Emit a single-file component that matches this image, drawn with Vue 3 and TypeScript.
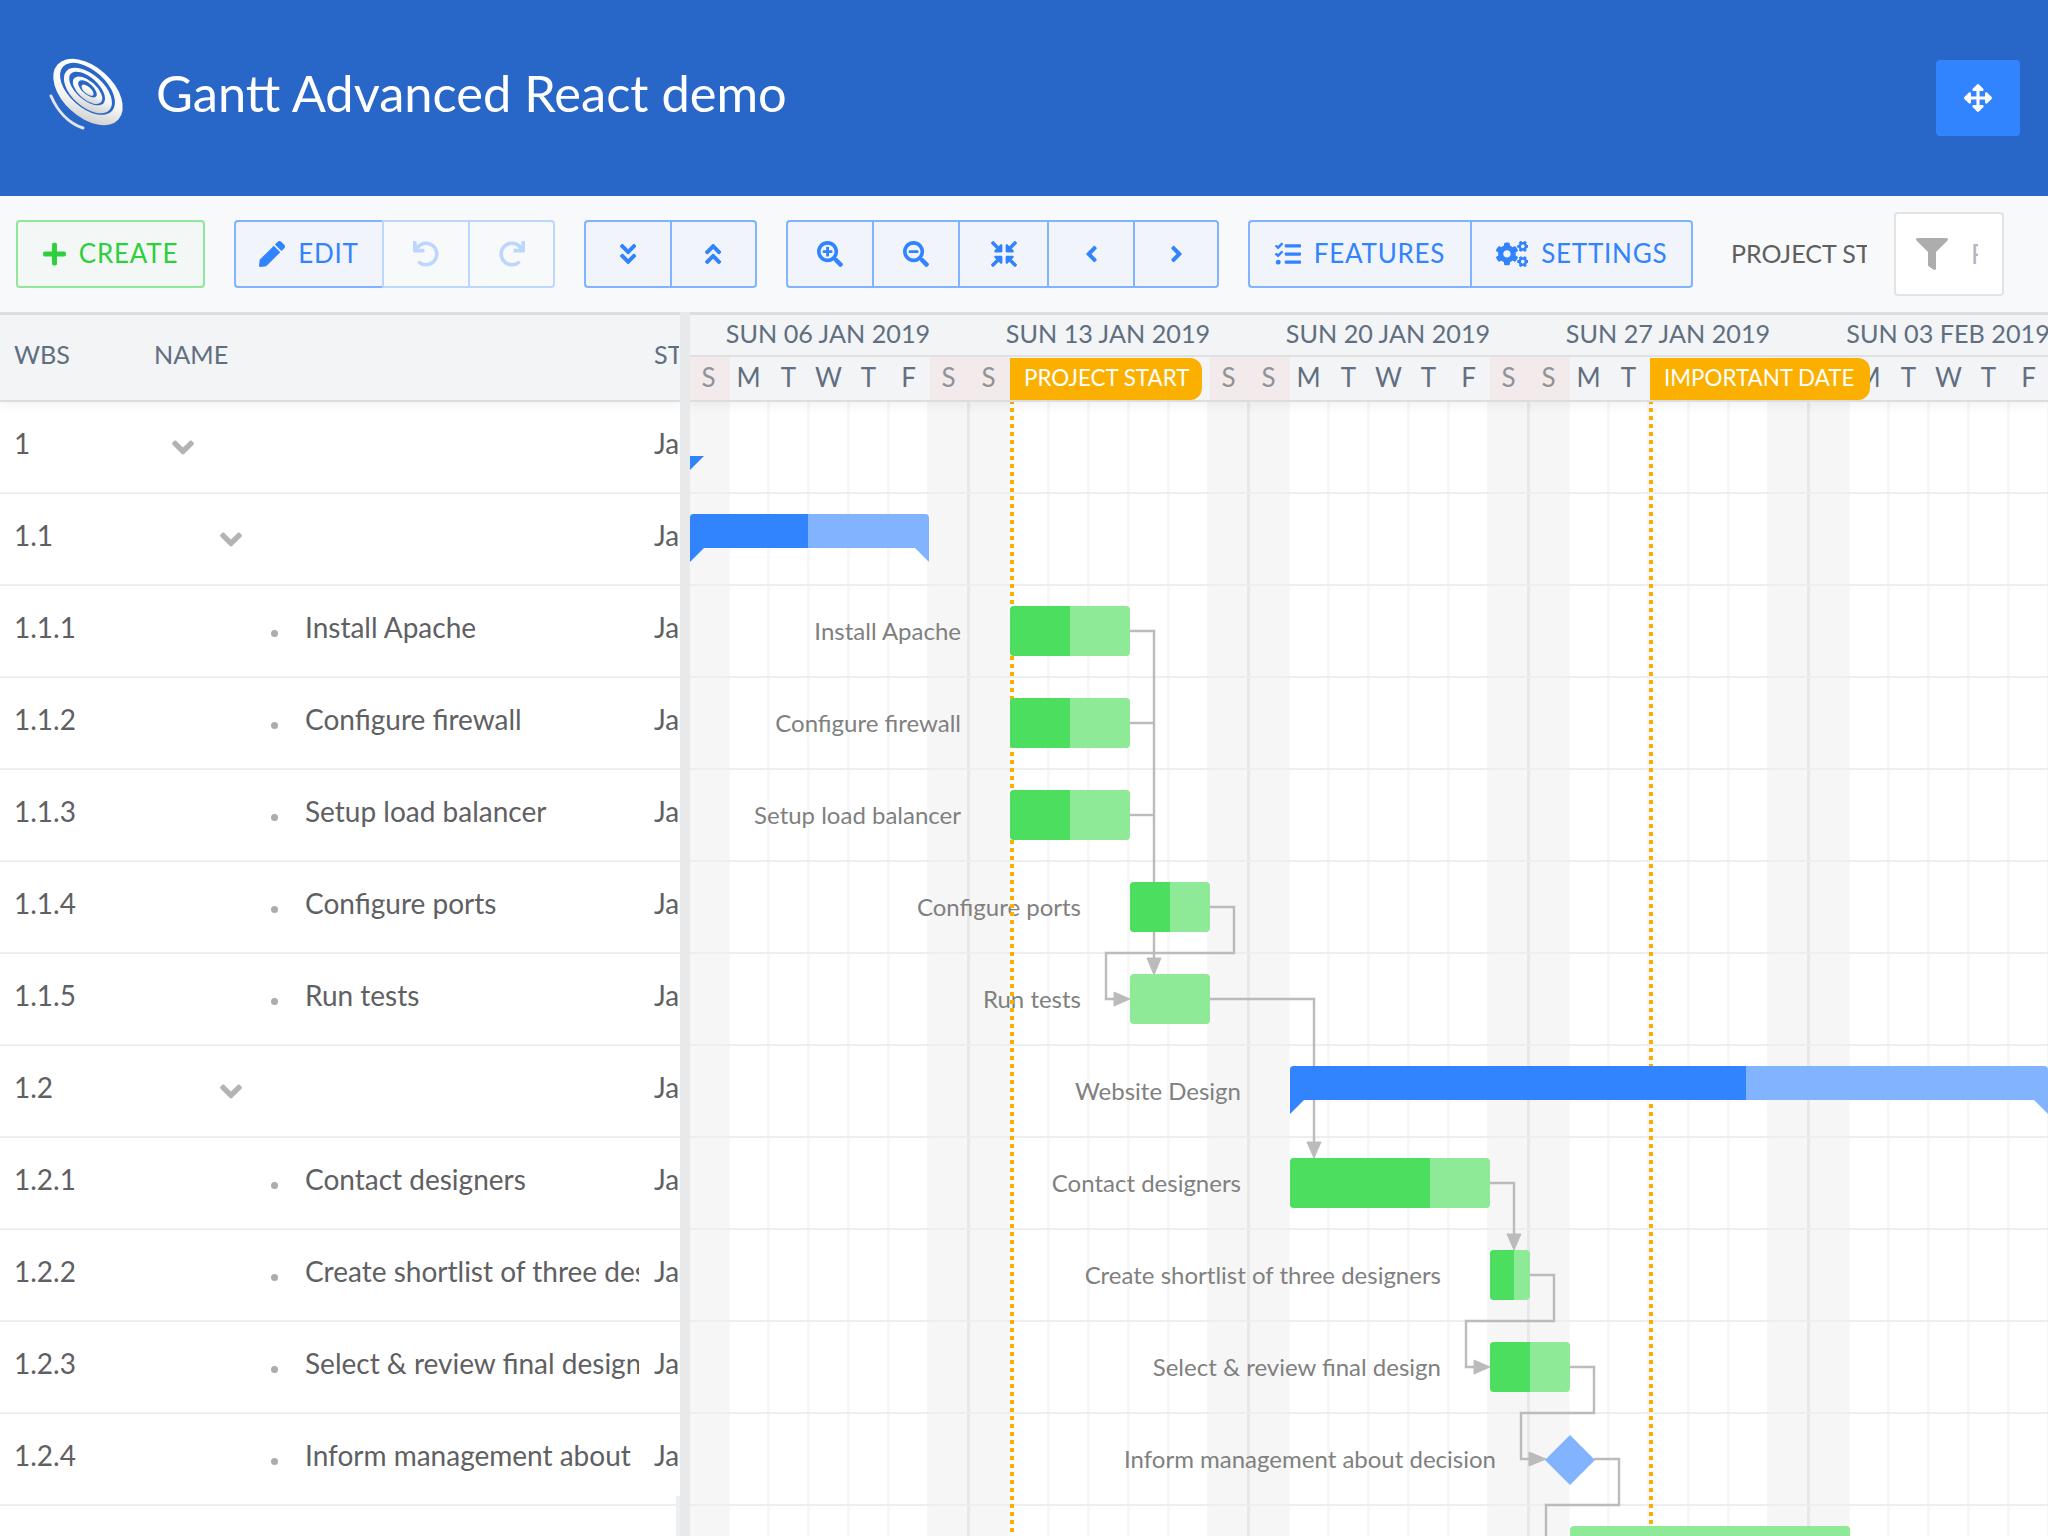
<script setup lang="ts">
interface Icon {
  vb: string
  d: string
  flip?: boolean
}

const angleDouble =
  'M143 256.3L7 120.3c-9.4-9.4-9.4-24.6 0-33.9l22.6-22.6c9.4-9.4 24.6-9.4 33.9 0l96.4 96.4 96.4-96.4c9.4-9.4 24.6-9.4 33.9 0L313 86.3c9.4 9.4 9.4 24.6 0 33.9l-136 136c-9.4 9.5-24.6 9.5-34 .1zm34 192l136-136c9.4-9.4 9.4-24.6 0-33.9l-22.6-22.6c-9.4-9.4-24.6-9.4-33.9 0L160 352.1l-96.4-96.4c-9.4-9.4-24.6-9.4-33.9 0L7 278.3c-9.4 9.4-9.4 24.6 0 33.9l136 136c9.4 9.5 24.6 9.5 34 .1z'
const lensTail =
  'zm201 284.7L476.7 505c-9.4 9.4-24.6 9.4-33.9 0L343 405.3c-4.5-4.5-7-10.6-7-17V372c-35.3 27.6-79.7 44-128 44C93.1 416 0 322.9 0 208S93.1 0 208 0s208 93.1 208 208c0 48.3-16.4 92.7-44 128h16.3c6.4 0 12.5 2.5 17 7l99.7 99.7c9.3 9.4 9.3 24.6 0 34zM344 208c0-75.2-60.8-136-136-136S72 132.8 72 208s60.8 136 136 136 136-60.8 136-136z'
const undo =
  'M212.333 224.333H12c-6.627 0-12-5.373-12-12V12C0 5.373 5.373 0 12 0h48c6.627 0 12 5.373 12 12v78.112C117.773 39.279 184.26 7.47 258.175 8.007c136.906.994 246.448 111.623 246.157 248.532C504.041 393.258 393.12 504 256.333 504c-64.089 0-122.496-24.313-166.51-64.215-5.099-4.622-5.334-12.554-.467-17.42l33.967-33.967c4.474-4.474 11.662-4.717 16.401-.525C170.76 415.336 211.58 432 256.333 432c97.268 0 176-78.716 176-176 0-97.267-78.716-176-176-176-58.496 0-110.28 28.476-142.274 72.333h98.274c6.627 0 12 5.373 12 12v48c0 6.627-5.373 12-12 12z'
const angleLeft =
  'M31.7 239l136-136c9.4-9.4 24.6-9.4 33.9 0l22.6 22.6c9.4 9.4 9.4 24.6 0 33.9L127.9 256l96.4 96.4c9.4 9.4 9.4 24.6 0 33.9L201.7 409c-9.4 9.4-24.6 9.4-33.9 0l-136-136c-9.5-9.4-9.5-24.6-.1-34z'

const icons: Record<string, Icon> = {
  plus: { vb: '0 0 448 512', d: 'M416 208H272V64c0-17.67-14.33-32-32-32h-32c-17.67 0-32 14.33-32 32v144H32c-17.67 0-32 14.33-32 32v32c0 17.67 14.33 32 32 32h144v144c0 17.67 14.33 32 32 32h32c17.67 0 32-14.33 32-32V304h144c17.67 0 32-14.33 32-32v-32c0-17.67-14.33-32-32-32z' },
  pen: { vb: '0 0 512 512', d: 'M290.74 93.24l128.02 128.02-277.99 277.99-114.14 12.6C11.35 513.54-1.56 500.62.14 485.34l12.7-114.22 277.9-277.88zm207.2-19.06l-60.11-60.11c-18.75-18.75-49.16-18.75-67.91 0l-56.55 56.55 128.02 128.02 56.55-56.55c18.75-18.76 18.75-49.16 0-67.91z' },
  undo: { vb: '0 0 512 512', d: undo },
  redo: { vb: '0 0 512 512', d: undo, flip: true },
  down: { vb: '0 0 320 512', d: angleDouble },
  up: { vb: '0 0 320 512', d: 'M177 255.7l136 136c9.4 9.4 9.4 24.6 0 33.9l-22.6 22.6c-9.4 9.4-24.6 9.4-33.9 0L160 351.9l-96.4 96.4c-9.4 9.4-24.6 9.4-33.9 0L7 425.7c-9.4-9.4-9.4-24.6 0-33.9l136-136c9.4-9.5 24.6-9.5 34-.1zm-34-192L7 199.7c-9.4 9.4-9.4 24.6 0 33.9l22.6 22.6c9.4 9.4 24.6 9.4 33.9 0l96.4-96.4 96.4 96.4c9.4 9.4 24.6 9.4 33.9 0l22.6-22.6c9.4-9.4 9.4-24.6 0-33.9l-136-136c-9.2-9.4-24.4-9.4-33.8 0z' },
  zoomIn: { vb: '0 0 512 512', d: 'M304 192v32c0 6.6-5.4 12-12 12h-56v56c0 6.6-5.4 12-12 12h-32c-6.6 0-12-5.4-12-12v-56h-56c-6.6 0-12-5.4-12-12v-32c0-6.6 5.4-12 12-12h56v-56c0-6.6 5.4-12 12-12h32c6.6 0 12 5.4 12 12v56h56c6.6 0 12 5.4 12 12' + lensTail },
  zoomOut: { vb: '0 0 512 512', d: 'M304 192v32c0 6.6-5.4 12-12 12H124c-6.6 0-12-5.4-12-12v-32c0-6.6 5.4-12 12-12h168c6.6 0 12 5.4 12 12' + lensTail },
  fit: { vb: '0 0 512 512', d: 'M200 288H88c-21.4 0-32.1 25.8-17 41l32.9 31-99.2 99.3c-6.2 6.2-6.2 16.4 0 22.6l25.4 25.4c6.2 6.2 16.4 6.2 22.6 0L152 408l31.1 33c15.1 15.1 40.9 4.4 40.9-17V312c0-13.3-10.7-24-24-24zm112-64h112c21.4 0 32.1-25.9 17-41l-33-31 99.3-99.3c6.2-6.2 6.2-16.4 0-22.6L481.9 4.7c-6.2-6.2-16.4-6.2-22.6 0L360 104l-31.1-33C313.8 55.9 288 66.6 288 88v112c0 13.3 10.7 24 24 24zm96 136l33-31.1c15.1-15.1 4.4-40.9-17-40.9H312c-13.3 0-24 10.7-24 24v112c0 21.4 25.9 32.1 41 17l31-32.9 99.3 99.3c6.2 6.2 16.4 6.2 22.6 0l25.4-25.4c6.2-6.2 6.2-16.4 0-22.6L408 360zM183 71.1L152 104 52.7 4.7c-6.2-6.2-16.4-6.2-22.6 0L4.7 30.1c-6.2 6.2-6.2 16.4 0 22.6L104 152l-33 31.1C55.9 198.2 66.6 224 88 224h112c13.3 0 24-10.7 24-24V88c0-21.3-25.9-32-41-16.9z' },
  left: { vb: '0 0 256 512', d: angleLeft },
  right: { vb: '0 0 256 512', d: angleLeft, flip: true },
  tasks: { vb: '0 0 512 512', d: 'M139.61 35.5a12 12 0 0 0-17 0L58.93 98.81l-22.7-22.12a12 12 0 0 0-17 0L3.53 92.41a12 12 0 0 0 0 17l47.59 47.4a12.78 12.78 0 0 0 17.61 0l15.59-15.62L156.52 69a12.09 12.09 0 0 0 .09-17zm0 159.19a12 12 0 0 0-17 0l-63.68 63.72-22.7-22.1a12 12 0 0 0-17 0L3.53 252a12 12 0 0 0 0 17L51 316.5a12.77 12.77 0 0 0 17.6 0l15.7-15.69 72.2-72.22a12 12 0 0 0 .09-16.9zM64 368c-26.49 0-48.59 21.5-48.59 48S37.53 464 64 464a48 48 0 0 0 0-96zm432 16H208a16 16 0 0 0-16 16v32a16 16 0 0 0 16 16h288a16 16 0 0 0 16-16v-32a16 16 0 0 0-16-16zm0-320H208a16 16 0 0 0-16 16v32a16 16 0 0 0 16 16h288a16 16 0 0 0 16-16V80a16 16 0 0 0-16-16zm0 160H208a16 16 0 0 0-16 16v32a16 16 0 0 0 16 16h288a16 16 0 0 0 16-16v-32a16 16 0 0 0-16-16z' },
  cogs: { vb: '0 0 640 512', d: 'M512.1 191l-8.2 14.3c-3 5.3-9.4 7.5-15.1 5.4-11.8-4.4-22.6-10.7-32.1-18.6-4.6-3.8-5.8-10.5-2.8-15.7l8.2-14.3c-6.9-8-12.3-17.3-15.9-27.4h-16.5c-6 0-11.2-4.3-12.2-10.3-2-12-2.1-24.6 0-37.1 1-6 6.2-10.4 12.2-10.4h16.5c3.6-10.1 9-19.4 15.9-27.4l-8.2-14.3c-3-5.2-1.9-11.9 2.8-15.7 9.5-7.9 20.4-14.2 32.1-18.6 5.7-2.1 12.1.1 15.1 5.4l8.2 14.3c10.5-1.9 21.2-1.9 31.7 0L552 6.3c3-5.3 9.4-7.5 15.1-5.4 11.8 4.4 22.6 10.7 32.1 18.6 4.6 3.8 5.8 10.5 2.8 15.7l-8.2 14.3c6.9 8 12.3 17.3 15.9 27.4h16.5c6 0 11.2 4.3 12.2 10.3 2 12 2.1 24.6 0 37.1-1 6-6.2 10.4-12.2 10.4h-16.5c-3.6 10.1-9 19.4-15.9 27.4l8.2 14.3c3 5.2 1.9 11.9-2.8 15.7-9.5 7.9-20.4 14.2-32.1 18.6-5.7 2.1-12.1-.1-15.1-5.4l-8.2-14.3c-10.4 1.9-21.2 1.9-31.7 0zm-10.5-58.8c38.5 29.6 82.4-14.3 52.8-52.8-38.5-29.7-82.4 14.3-52.8 52.8zM386.3 286.1l33.7 16.8c10.1 5.8 14.5 18.1 10.5 29.1-8.9 24.2-26.4 46.4-42.6 65.8-7.4 8.9-20.2 11.1-30.3 5.3l-29.1-16.8c-16 13.7-34.6 24.6-54.9 31.7v33.6c0 11.6-8.3 21.6-19.7 23.6-24.6 4.2-50.4 4.4-75.9 0-11.5-2-20-11.9-20-23.6V418c-20.3-7.2-38.9-18-54.9-31.7L74 403c-10 5.8-22.9 3.6-30.3-5.3-16.2-19.4-33.3-41.6-42.2-65.7-4-10.9.4-23.2 10.5-29.1l33.3-16.8c-3.9-20.9-3.9-42.4 0-63.4L12 205.8c-10.1-5.8-14.6-18.1-10.5-29 8.9-24.2 26-46.4 42.2-65.8 7.4-8.9 20.2-11.1 30.3-5.3l29.1 16.8c16-13.7 34.6-24.6 54.9-31.7V57.1c0-11.5 8.2-21.5 19.6-23.5 24.6-4.2 50.5-4.4 76-.1 11.5 2 20 11.9 20 23.6v33.6c20.3 7.2 38.9 18 54.9 31.7l29.1-16.8c10-5.8 22.9-3.6 30.3 5.3 16.2 19.4 33.2 41.6 42.1 65.8 4 10.9.1 23.2-10 29.1l-33.7 16.8c3.9 21 3.9 42.5 0 63.5zm-117.6 21.1c59.2-77-28.7-164.9-105.7-105.7-59.2 77 28.7 164.9 105.7 105.7zm243.4 182.7l-8.2 14.3c-3 5.3-9.4 7.5-15.1 5.4-11.8-4.4-22.6-10.7-32.1-18.6-4.6-3.8-5.8-10.5-2.8-15.7l8.2-14.3c-6.9-8-12.3-17.3-15.9-27.4h-16.5c-6 0-11.2-4.3-12.2-10.3-2-12-2.1-24.6 0-37.1 1-6 6.2-10.4 12.2-10.4h16.5c3.6-10.1 9-19.4 15.9-27.4l-8.2-14.3c-3-5.2-1.9-11.9 2.8-15.7 9.5-7.9 20.4-14.2 32.1-18.6 5.7-2.1 12.1.1 15.1 5.4l8.2 14.3c10.5-1.9 21.2-1.9 31.7 0l8.2-14.3c3-5.3 9.4-7.5 15.1-5.4 11.8 4.4 22.6 10.7 32.1 18.6 4.6 3.8 5.8 10.5 2.8 15.7l-8.2 14.3c6.9 8 12.3 17.3 15.9 27.4h16.5c6 0 11.2 4.3 12.2 10.3 2 12 2.1 24.6 0 37.1-1 6-6.2 10.4-12.2 10.4h-16.5c-3.6 10.1-9 19.4-15.9 27.4l8.2 14.3c3 5.2 1.9 11.9-2.8 15.7-9.5 7.9-20.4 14.2-32.1 18.6-5.7 2.1-12.1-.1-15.1-5.4l-8.2-14.3c-10.4 1.9-21.2 1.9-31.7 0zM501.6 431c38.5 29.6 82.4-14.3 52.8-52.8-38.5-29.6-82.4 14.3-52.8 52.8z' },
  filter: { vb: '0 0 512 512', d: 'M487.976 0H24.028C2.71 0-8.047 25.866 7.058 40.971L192 225.941V432c0 7.831 3.821 15.17 10.237 19.662l80 55.98C298.02 518.69 320 507.493 320 487.98V225.941l184.947-184.97C520.021 25.896 509.338 0 487.976 0z' },
  move: { vb: '0 0 512 512', d: 'M352.201 425.775l-79.196 79.196c-9.373 9.373-24.568 9.373-33.941 0l-79.196-79.196c-15.119-15.119-4.411-40.971 16.971-40.97h51.162L228 284H127.196v51.162c0 21.382-25.851 32.09-40.971 16.971L7.029 272.937c-9.373-9.373-9.373-24.569 0-33.941L86.225 159.8c15.119-15.119 40.971-4.411 40.971 16.971V228H228V127.196h-51.23c-21.382 0-32.09-25.851-16.971-40.971l79.196-79.196c9.373-9.373 24.568-9.373 33.941 0l79.196 79.196c15.119 15.119 4.411 40.971-16.971 40.971h-51.162V228h100.804v-51.162c0-21.382 25.851-32.09 40.97-16.971l79.196 79.196c9.373 9.373 9.373 24.569 0 33.941L425.773 352.2c-15.119 15.119-40.971 4.411-40.97-16.971V284H284v100.804h51.23c21.382 0 32.09 25.851 16.971 40.971z' },
  chevron: { vb: '0 0 320 512', d: 'M143 352.3L7 216.3c-9.4-9.4-9.4-24.6 0-33.9l22.6-22.6c9.4-9.4 24.6-9.4 33.9 0l96.4 96.4 96.4-96.4c9.4-9.4 24.6-9.4 33.9 0l22.6 22.6c9.4 9.4 9.4 24.6 0 33.9l-136 136c-9.2 9.4-24.4 9.4-33.8 0z' },
}

interface Btn {
  icon: string
  text?: string
  width: number
  disabled?: boolean
}

const toolbar: Btn[][] = [
  [
    { icon: 'pen', text: 'EDIT', width: 148 },
    { icon: 'undo', width: 86, disabled: true },
    { icon: 'redo', width: 87, disabled: true },
  ],
  [
    { icon: 'down', width: 86 },
    { icon: 'up', width: 87 },
  ],
  [
    { icon: 'zoomIn', width: 86 },
    { icon: 'zoomOut', width: 86 },
    { icon: 'fit', width: 89 },
    { icon: 'left', width: 86 },
    { icon: 'right', width: 86 },
  ],
  [
    { icon: 'tasks', text: 'FEATURES', width: 222 },
    { icon: 'cogs', text: 'SETTINGS', width: 223 },
  ],
]

interface Row {
  wbs: string
  name?: string
  level?: number
}

const rows: Row[] = [
  { wbs: '1', level: 0 },
  { wbs: '1.1', level: 1 },
  { wbs: '1.1.1', name: 'Install Apache' },
  { wbs: '1.1.2', name: 'Configure firewall' },
  { wbs: '1.1.3', name: 'Setup load balancer' },
  { wbs: '1.1.4', name: 'Configure ports' },
  { wbs: '1.1.5', name: 'Run tests' },
  { wbs: '1.2', level: 1 },
  { wbs: '1.2.1', name: 'Contact designers' },
  { wbs: '1.2.2', name: 'Create shortlist of three designers' },
  { wbs: '1.2.3', name: 'Select & review final design' },
  { wbs: '1.2.4', name: 'Inform management about decision' },
  { wbs: '' },
]

const weeks = ['SUN 06 JAN 2019', 'SUN 13 JAN 2019', 'SUN 20 JAN 2019', 'SUN 27 JAN 2019', 'SUN 03 FEB 2019']
const days = Array.from({ length: 35 }, (_, i) => ({
  letter: 'SMTWTFS'[i % 7],
  weekend: i % 7 === 0 || i % 7 === 6,
  saturday: i % 7 === 6,
}))

const DAY = 40
const ROW = 92

interface Task {
  row: number
  day: number
  len: number
  done: number
  label?: string
}

const tasks: Task[] = [
  { row: 2, day: 8, len: 3, done: 50, label: 'Install Apache' },
  { row: 3, day: 8, len: 3, done: 50, label: 'Configure firewall' },
  { row: 4, day: 8, len: 3, done: 50, label: 'Setup load balancer' },
  { row: 5, day: 11, len: 2, done: 50, label: 'Configure ports' },
  { row: 6, day: 11, len: 2, done: 0, label: 'Run tests' },
  { row: 8, day: 15, len: 5, done: 70, label: 'Contact designers' },
  { row: 9, day: 20, len: 1, done: 60, label: 'Create shortlist of three designers' },
  { row: 10, day: 20, len: 2, done: 50, label: 'Select & review final design' },
  { row: 12, day: 22, len: 7, done: 0 },
]

const parents = [
  { row: 1, left: 0, width: 239, done: 49.4 },
  { row: 7, left: 600, width: 758, done: 60.2 },
]

const labels = [
  ...tasks.filter((t) => t.label).map((t) => ({ text: t.label as string, x: t.day * DAY - 49, y: t.row * ROW + 44 })),
  { text: 'Website Design', x: 600 - 49, y: 7 * ROW + 44 },
  { text: 'Inform management about decision', x: 855 - 49, y: 11 * ROW + 44 },
]

// connector lines, in page coordinates (the svg viewBox starts at the canvas corner)
const links = [
  '1130,631 1154,631 1154,960',
  '1130,723 1154,723',
  '1130,815 1154,815',
  '1210,907 1234,907 1234,953 1106,953 1106,999 1116,999',
  '1210,999 1314,999 1314,1144',
  '1490,1183 1514,1183 1514,1236',
  '1530,1275 1554,1275 1554,1321 1466,1321 1466,1367 1476,1367',
  '1570,1367 1594,1367 1594,1413 1521,1413 1521,1459 1531,1459',
  '1594,1459 1619,1459 1619,1505 1546,1505 1546,1540',
]
const arrows = [
  '1147,958 1161,958 1154,975',
  '1114,992 1130,999 1114,1006',
  '1307,1142 1321,1142 1314,1158',
  '1507,1234 1521,1234 1514,1250',
  '1474,1360 1490,1367 1474,1374',
  '1529,1452 1546,1459 1529,1466',
]

function iconWidth(name: string) {
  const parts = icons[name].vb.split(' ')
  return Number(parts[2]) / Number(parts[3])
}
</script>

<template>
  <div class="page">
    <header class="top">
      <svg class="logo" viewBox="0 0 72 72">
        <defs>
          <linearGradient id="swirl" x1="0.1" y1="0" x2="0.9" y2="1">
            <stop offset="0" stop-color="#ffffff" />
            <stop offset="0.6" stop-color="#f6f6f6" />
            <stop offset="1" stop-color="#c4c4c4" />
          </linearGradient>
        </defs>
        <g transform="rotate(42 38 33)">
          <ellipse cx="38" cy="33" rx="41" ry="25" fill="url(#swirl)" />
          <ellipse cx="35.5" cy="31" rx="33" ry="18.5" fill="#2866c8" />
          <ellipse cx="37" cy="32" rx="29" ry="16" fill="url(#swirl)" />
          <ellipse cx="35" cy="31" rx="22" ry="11" fill="#2866c8" />
          <ellipse cx="36.5" cy="32" rx="18" ry="9" fill="url(#swirl)" />
          <ellipse cx="35.5" cy="31" rx="11.5" ry="5.4" fill="#2866c8" />
          <ellipse cx="36.5" cy="32" rx="7.5" ry="3.4" fill="url(#swirl)" />
        </g>
        <path d="M1 37 C7 51 18 64 33 69" fill="none" stroke="#e4e4e4" stroke-width="3" stroke-linecap="round" />
      </svg>
      <h1 class="title">Gantt Advanced React demo</h1>
      <button class="move">
        <svg class="move__icon" :viewBox="icons.move.vb"><path :d="icons.move.d" /></svg>
      </button>
    </header>

    <div class="toolbar">
      <button class="create">
        <svg class="icon" :viewBox="icons.plus.vb"><path :d="icons.plus.d" /></svg>
        <span class="btn-text">CREATE</span>
      </button>
      <div v-for="(group, g) in toolbar" :key="g" class="group">
        <button
          v-for="btn in group"
          :key="btn.icon"
          class="seg"
          :class="{ 'seg--off': btn.disabled }"
          :style="{ width: btn.width + 'px' }"
        >
          <svg
            class="icon"
            :class="{ 'icon--flip': icons[btn.icon].flip }"
            :viewBox="icons[btn.icon].vb"
            :style="{ width: iconWidth(btn.icon) * 26 + 'px' }"
          >
            <path :d="icons[btn.icon].d" />
          </svg>
          <span v-if="btn.text" class="btn-text">{{ btn.text }}</span>
        </button>
      </div>
      <div class="field-label">PROJECT START</div>
      <div class="filter">
        <svg class="filter__icon" :viewBox="icons.filter.vb"><path :d="icons.filter.d" /></svg>
        <span class="filter__ph">Find tasks by name</span>
      </div>
    </div>

    <div class="gantt">
      <section class="grid">
        <div class="grid__head">
          <div class="cell cell--wbs">WBS</div>
          <div class="cell cell--name">NAME</div>
          <div class="cell cell--start">START</div>
        </div>
        <div v-for="row in rows" :key="row.wbs" class="grid__row">
          <div class="cell cell--wbs">{{ row.wbs }}</div>
          <div class="cell cell--name">
            <template v-if="row.level !== undefined">
              <svg
                class="chevron"
                :class="{ 'chevron--sub': row.level === 1 }"
                :viewBox="icons.chevron.vb"
              >
                <path :d="icons.chevron.d" />
              </svg>
            </template>
            <template v-else-if="row.name">
              <span class="dot"></span>
              <span class="name-text">{{ row.name }}</span>
            </template>
          </div>
          <div v-if="row.wbs" class="cell cell--start">Jan 14 2019</div>
        </div>
      </section>

      <div class="splitter"></div>

      <section class="timeline">
        <div class="timeline__head">
          <div class="weeks">
            <div v-for="w in weeks" :key="w" class="week">{{ w }}</div>
          </div>
          <div class="days">
            <div
              v-for="(d, i) in days"
              :key="i"
              class="day"
              :class="{ 'day--off': d.weekend }"
            >
              {{ d.letter }}
            </div>
          </div>
          <div class="tag tag--start">PROJECT START</div>
          <div class="tag tag--date">IMPORTANT DATE</div>
        </div>

        <div class="canvas">
          <div class="canvas__cols">
            <div
              v-for="(d, i) in days"
              :key="i"
              class="col"
              :class="{ 'col--off': d.weekend, 'col--sat': d.saturday }"
            ></div>
          </div>
          <div class="canvas__rows">
            <div v-for="row in rows" :key="row.wbs" class="line"></div>
          </div>

          <div
            v-for="l in labels"
            :key="l.text"
            class="label"
            :style="{ left: l.x + 'px', top: l.y + 'px' }"
          >
            {{ l.text }}
          </div>

          <div class="dotted dotted--a"></div>
          <div class="dotted dotted--b"></div>

          <svg class="links" viewBox="690 402 1358 1134">
            <polyline v-for="p in links" :key="p" :points="p" class="link" />
            <polygon v-for="p in arrows" :key="p" :points="p" class="arrow" />
          </svg>

          <div class="stub"></div>

          <div
            v-for="p in parents"
            :key="p.row"
            class="parent"
            :style="{ left: p.left + 'px', top: p.row * ROW + 20 + 'px', width: p.width + 'px' }"
          >
            <div class="parent__done" :style="{ width: p.done + '%' }"></div>
          </div>

          <div
            v-for="t in tasks"
            :key="t.row"
            class="bar"
            :style="{ left: t.day * DAY + 'px', top: t.row * ROW + 20 + 'px', width: t.len * DAY + 'px' }"
          >
            <div class="bar__done" :style="{ width: t.done + '%' }"></div>
          </div>

          <div class="milestone"></div>
        </div>
      </section>

      <div class="grip"></div>
    </div>
  </div>
</template>

<style>
html,
body {
  margin: 0;
  background: #fff;
}
</style>

<style scoped>
.page {
  width: 2048px;
  height: 1536px;
  overflow: hidden;
  display: flex;
  flex-direction: column;
  font-family: Lato, 'Open Sans', sans-serif;
  font-size: 26px;
}

.top {
  height: 196px;
  flex: none;
  box-sizing: border-box;
  display: flex;
  align-items: center;
  padding: 0 28px 0 50px;
  background: #2866c8;
}

.logo {
  width: 72px;
  height: 72px;
  flex: none;
  margin-top: -6px;
  overflow: visible;
}

.title {
  margin: -12px 0 0 34px;
  flex: 1;
  font-size: 50.6px;
  font-weight: 400;
  color: #fff;
}

.move {
  width: 84px;
  height: 76px;
  display: flex;
  align-items: center;
  justify-content: center;
  padding: 0;
  border: 0;
  border-radius: 4px;
  background: #3183fe;
}

.move__icon {
  width: 28px;
  height: 28px;
  fill: #fff;
}

.toolbar {
  height: 116px;
  flex: none;
  box-sizing: border-box;
  display: flex;
  align-items: center;
  padding-left: 16px;
  background: #f8f9fb;
}

button {
  font-family: inherit;
  font-size: 26px;
}

.btn-text {
  letter-spacing: 0.75px;
  margin-top: -2px;
}

.icon {
  height: 26px;
  flex: none;
  fill: currentColor;
}

.icon--flip {
  transform: scaleX(-1);
}

.create {
  width: 189px;
  height: 68px;
  box-sizing: border-box;
  display: flex;
  align-items: center;
  justify-content: center;
  gap: 13px;
  padding: 0;
  border: 2px solid #8ee79a;
  border-radius: 4px;
  background: #f3f8f6;
  color: #2dcf3c;
}

.create .icon {
  width: 23px;
}

.group {
  display: flex;
  height: 68px;
  box-sizing: border-box;
  margin-left: 29px;
}

.seg {
  height: 68px;
  box-sizing: border-box;
  display: flex;
  align-items: center;
  justify-content: center;
  gap: 13px;
  padding: 0;
  border: 2px solid #82b3ff;
  border-right-width: 0;
  background: #f1f4fb;
  color: #3183fe;
}

.seg:first-child {
  border-radius: 4px 0 0 4px;
}

.seg:last-child {
  border-right-width: 2px;
  border-radius: 0 4px 4px 0;
}

.seg--off {
  border-color: #bcd6fd;
  background: #f8f9fb;
  color: #bcd6fd;
}

.field-label {
  width: 136px;
  margin-left: 38px;
  margin-top: -2px;
  overflow: hidden;
  white-space: nowrap;
  font-size: 25px;
  color: #5e5e5e;
}

.filter {
  width: 110px;
  height: 84px;
  box-sizing: border-box;
  display: flex;
  align-items: center;
  margin-left: 27px;
  padding-left: 20px;
  border: 2px solid #e2e3e5;
  border-radius: 4px;
  background: #fff;
}

.filter__icon {
  width: 32px;
  height: 32px;
  flex: none;
  fill: #adadad;
}

.filter__ph {
  width: 7px;
  margin-left: 23px;
  overflow: hidden;
  white-space: nowrap;
  color: #b5b5c0;
}

.gantt {
  flex: 1;
  min-height: 0;
  position: relative;
  display: flex;
}

.grid {
  width: 680px;
  flex: none;
  display: flex;
  flex-direction: column;
  overflow: hidden;
}

.grid__head {
  height: 90px;
  flex: none;
  box-sizing: border-box;
  display: flex;
  align-items: center;
  border-top: 3px solid #dcdde0;
  border-bottom: 2px solid #dcdde0;
  background: #f3f4f6;
  font-size: 25.2px;
  color: #606f80;
  box-shadow: 0 4px 10px rgba(0, 0, 0, 0.05);
}

.grid__head .cell {
  padding-left: 14px;
  margin-top: -8px;
}

.grid__head .cell--name,
.grid__head .cell--start {
  padding-left: 15px;
}

.grid__row {
  height: 92px;
  flex: none;
  box-sizing: border-box;
  display: flex;
  align-items: center;
  border-bottom: 2px solid #eeeeee;
  font-size: 28px;
  color: #5f6063;
}

.grid__row .cell {
  margin-top: -8px;
}

.cell {
  box-sizing: border-box;
  padding-left: 15px;
  white-space: nowrap;
  overflow: hidden;
}

.cell--wbs {
  width: 139px;
}

.grid__row .cell--wbs {
  padding-left: 14px;
}

.cell--name {
  width: 500px;
  display: flex;
  align-items: center;
}

.cell--start {
  width: 40px;
}

.chevron {
  height: 35px;
  width: 22px;
  margin-left: 18px;
  margin-top: 8px;
  fill: #b3b3b3;
}

.chevron--sub {
  margin-left: 66px;
}

.dot {
  width: 7px;
  height: 7px;
  flex: none;
  margin: 12px 27px 0 117px;
  border-radius: 50%;
  background: #aaabab;
}

.name-text {
  flex: none;
  color: #5f6063;
}

.splitter {
  width: 10px;
  flex: none;
  background: #e8e9eb;
}

.grip {
  position: absolute;
  left: 676px;
  bottom: 0;
  width: 4px;
  height: 40px;
  background: #eeeff0;
}

.timeline {
  flex: 1;
  min-width: 0;
  position: relative;
  display: flex;
  flex-direction: column;
  overflow: hidden;
}

.timeline__head {
  height: 90px;
  flex: none;
  box-sizing: border-box;
  position: relative;
  z-index: 2;
  display: flex;
  flex-direction: column;
  border-top: 3px solid #dcdde0;
  border-bottom: 2px solid #dcdde0;
  background: #f3f4f6;
  color: #606f80;
  box-shadow: 0 4px 10px rgba(0, 0, 0, 0.05);
}

.weeks {
  height: 42px;
  flex: none;
  display: flex;
  box-sizing: border-box;
  margin-left: -2px;
  border-bottom: 2px solid #dfe0e2;
}

.week {
  width: 280px;
  flex: none;
  font-size: 25.2px;
  line-height: 36px;
  text-align: center;
  white-space: nowrap;
}

.days {
  flex: 1;
  display: flex;
}

.day {
  width: 40px;
  flex: none;
  box-sizing: border-box;
  padding-right: 3px;
  line-height: 40px;
  text-align: center;
}

.day--off {
  background: #f3ebeb;
  color: #8f9399;
}

.tag {
  position: absolute;
  bottom: 0;
  height: 42px;
  box-sizing: border-box;
  padding-left: 14px;
  border-radius: 0 12px 12px 0;
  font-size: 22.4px;
  line-height: 40px;
  white-space: nowrap;
  color: #fff;
  background: #fbb000;
}

.tag--start {
  left: 320px;
  width: 192px;
}

.tag--date {
  left: 960px;
  width: 220px;
}

.canvas {
  flex: 1;
  position: relative;
  font-size: 24px;
}

.canvas__cols {
  position: absolute;
  inset: 0;
  display: flex;
}

.col {
  width: 40px;
  flex: none;
  box-sizing: border-box;
  border-right: 3px solid #f7f7f7;
}

.col--off {
  background: #f6f6f6;
}

.col--sat {
  border-right-color: #e8e8e8;
}

.canvas__rows {
  position: absolute;
  inset: 0;
  display: flex;
  flex-direction: column;
}

.line {
  height: 92px;
  flex: none;
  box-sizing: border-box;
  border-bottom: 2px solid #eeeeee;
}

.label {
  position: absolute;
  transform: translate(-100%, -50%);
  white-space: nowrap;
  color: #808080;
}

.dotted {
  position: absolute;
  top: -2px;
  bottom: 0;
  width: 4px;
  background: repeating-linear-gradient(to bottom, #fbb000 0 4px, transparent 4px 8px);
}

.dotted--a {
  left: 320px;
}

.dotted--b {
  left: 959px;
}

.links {
  position: absolute;
  left: 0;
  top: 0;
  width: 1358px;
  height: 1134px;
}

.link {
  fill: none;
  stroke: #bbbbbb;
  stroke-width: 2.4;
}

.arrow {
  fill: #bbbbbb;
  stroke: #bbbbbb;
  stroke-width: 1;
}

.stub {
  position: absolute;
  left: 0;
  top: 54px;
  width: 14px;
  height: 14px;
  background: #3183fe;
  clip-path: polygon(0 0, 100% 0, 0 100%);
}

.parent {
  position: absolute;
  height: 34px;
  border-radius: 4px 4px 0 0;
  background: #82b3ff;
}

.parent::before,
.parent::after {
  content: '';
  position: absolute;
  top: 100%;
  width: 14px;
  height: 14px;
}

.parent::after {
  right: 0;
  background: #82b3ff;
  clip-path: polygon(0 0, 100% 0, 100% 100%);
}

.parent__done {
  height: 100%;
  border-radius: 4px 0 0 0;
  background: #3183fe;
}

.parent::before {
  left: 0;
  background: #3183fe;
  clip-path: polygon(0 0, 100% 0, 0 100%);
}

.bar {
  position: absolute;
  height: 50px;
  overflow: hidden;
  border-radius: 4px;
  background: #8eea97;
}

.bar__done {
  height: 100%;
  background: #4cde5e;
}

.milestone {
  position: absolute;
  left: 855px;
  top: 1033px;
  width: 50px;
  height: 50px;
  background: #82b3ff;
  clip-path: polygon(50% 0, 100% 50%, 50% 100%, 0 50%);
}
</style>
